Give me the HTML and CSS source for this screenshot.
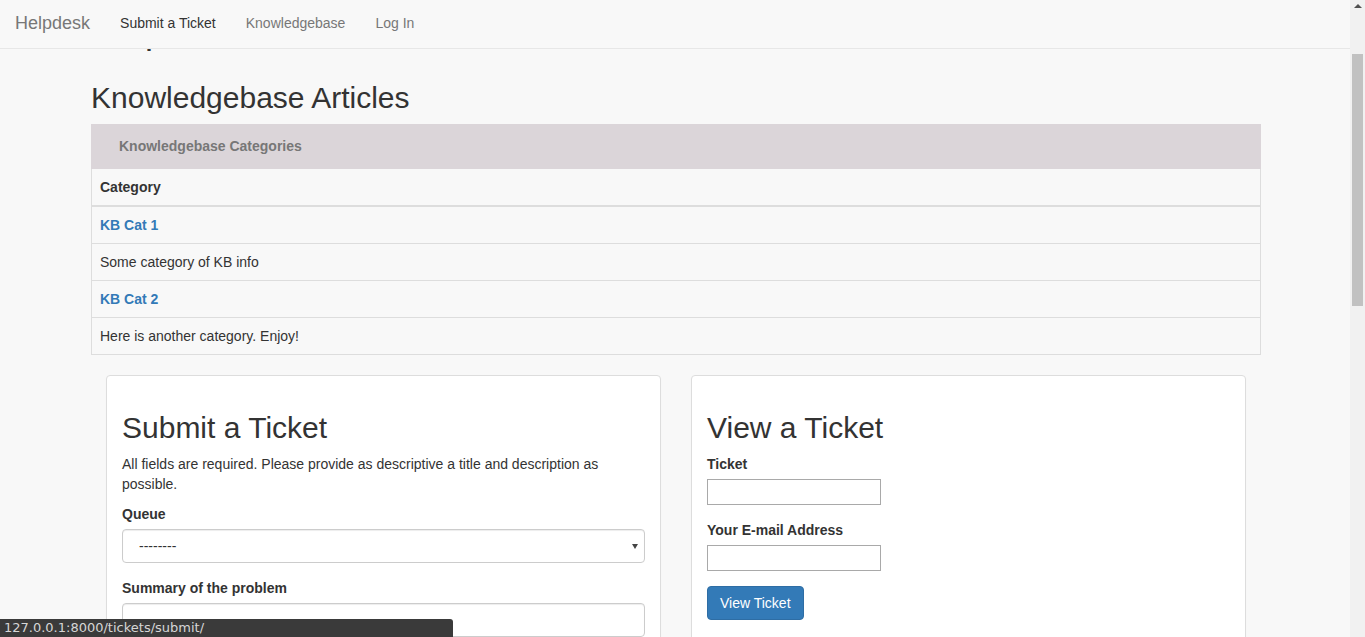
FILE: index.html
```html
<!DOCTYPE html>
<html lang="en">
<head>
<meta charset="utf-8">
<title>Helpdesk</title>
<link rel="stylesheet" href="styles.css">
</head>
<body>
<nav class="navbar">
  <a class="brand" href="#">Helpdesk</a>
  <ul class="nav">
    <li><a class="nav-link active" href="#">Submit a Ticket</a></li>
    <li><a class="nav-link" href="#">Knowledgebase</a></li>
    <li><a class="nav-link" href="#">Log In</a></li>
  </ul>
</nav>

<div class="page">
  <main class="container">
    <h1 class="site-title">Helpdesk</h1>
    <h2 class="page-title">Knowledgebase Articles</h2>

    <section class="kb-panel">
      <div class="kb-heading">Knowledgebase Categories</div>
      <table class="kb-table">
        <thead>
          <tr><th>Category</th></tr>
        </thead>
        <tbody>
          <tr><td><a class="kb-link" href="#">KB Cat 1</a></td></tr>
          <tr><td>Some category of KB info</td></tr>
          <tr><td><a class="kb-link" href="#">KB Cat 2</a></td></tr>
          <tr><td>Here is another category. Enjoy!</td></tr>
        </tbody>
      </table>
    </section>

    <div class="cards">
      <section class="card">
        <h2 class="card-title">Submit a Ticket</h2>
        <p class="card-text">All fields are required. Please provide as descriptive a title and description as possible.</p>
        <div class="form-group">
          <label class="label">Queue</label>
          <div class="select-wrap">
            <select class="form-control select"><option>--------</option></select>
          </div>
        </div>
        <div class="form-group">
          <label class="label">Summary of the problem</label>
          <input class="form-control" type="text">
        </div>
        <div class="form-group">
          <label class="label">Your E-mail Address</label>
          <input class="form-control" type="text">
        </div>
      </section>

      <section class="card">
        <h2 class="card-title">View a Ticket</h2>
        <div class="form-group">
          <label class="label">Ticket</label>
          <input class="plain-input" type="text">
        </div>
        <div class="form-group">
          <label class="label">Your E-mail Address</label>
          <input class="plain-input" type="text">
        </div>
        <button class="btn-primary" type="button">View Ticket</button>
      </section>
    </div>
  </main>
</div>

<div class="scrollbar">
  <span class="sb-arrow"></span>
  <span class="sb-thumb"></span>
</div>

<div class="statusbar">127.0.0.1:8000/tickets/submit/</div>
</body>
</html>
```

FILE: styles.css
```css
* { box-sizing: border-box; }

html, body {
  margin: 0;
  height: 637px;
  overflow: hidden;
}

body {
  background: #f8f8f8;
  color: #333;
  font-family: "Liberation Sans", Arial, sans-serif;
  font-size: 14px;
  line-height: 20px;
}

a { text-decoration: none; }

/* navbar */
.navbar {
  position: fixed;
  top: 0;
  left: 0;
  width: 1350px;
  height: 49px;
  background: #f8f8f8;
  border-bottom: 1px solid #e7e7e7;
  display: flex;
  align-items: flex-start;
  z-index: 10;
}

.brand {
  padding: 13px 15px 15px;
  font-size: 18px;
  line-height: 20px;
  color: #777;
}

.nav {
  list-style: none;
  margin: 0;
  padding: 0;
  display: flex;
}

.nav-link {
  display: block;
  padding: 13px 15px 15px;
  line-height: 20px;
  color: #777;
}

.nav-link.active { color: #333; }

/* page */
.page { width: 1352px; }

.container {
  width: 1170px;
  margin: 0 auto;
  padding-top: 11px;
}

.site-title {
  margin: 0 0 30px;
  font-size: 36px;
  font-weight: 500;
  line-height: 1.1;
}

.page-title {
  margin: 20px 0 10px;
  font-size: 30px;
  font-weight: 500;
  line-height: 1.1;
}

/* knowledgebase table */
.kb-panel { margin-bottom: 20px; }

.kb-heading {
  background: #dbd5d9;
  color: #777;
  font-weight: bold;
  padding: 12px 28px 13px;
  line-height: 20px;
}

.kb-table {
  width: 100%;
  border-collapse: collapse;
  border: 1px solid #ddd;
  border-top: 0;
}

.kb-table th,
.kb-table td {
  text-align: left;
  padding: 8px;
  line-height: 20px;
}

.kb-table th {
  font-weight: bold;
  border-bottom: 2px solid #ddd;
}

.kb-table td { border-top: 1px solid #ddd; }

.kb-link {
  color: #337ab7;
  font-weight: bold;
}

/* cards */
.cards {
  display: grid;
  grid-template-columns: 555px 555px;
  column-gap: 30px;
  padding: 0 15px;
}

.card {
  background: #fff;
  border: 1px solid #ddd;
  border-radius: 4px;
  box-shadow: 0 1px 1px rgba(0, 0, 0, .05);
  padding: 15px 15px 15px;
}

.card-title {
  margin: 20px 0 10px;
  font-size: 30px;
  font-weight: 500;
  line-height: 1.1;
}

.card-text { margin: 0 0 10px; }

.form-group { margin-bottom: 15px; }

.label {
  display: block;
  font-weight: bold;
  margin-bottom: 5px;
}

.form-control {
  display: block;
  width: 100%;
  height: 34px;
  padding: 6px 12px;
  font-family: "Liberation Sans", Arial, sans-serif;
  font-size: 14px;
  color: #555;
  background: #fff;
  border: 1px solid #ccc;
  border-radius: 4px;
  box-shadow: inset 0 1px 1px rgba(0, 0, 0, .075);
}

.select-wrap { position: relative; }

.select {
  appearance: none;
  -webkit-appearance: none;
  padding-left: 16px;
  color: #333;
}

.select-wrap::after {
  content: "";
  position: absolute;
  right: 7px;
  top: 15px;
  border-left: 3px solid transparent;
  border-right: 3px solid transparent;
  border-top: 5px solid #444;
}

.plain-input {
  display: block;
  width: 174px;
  height: 26px;
  border: 1px solid #a9a9a9;
  background: #fff;
  padding: 2px 3px;
}

.btn-primary {
  display: inline-block;
  height: 34px;
  padding: 6px 12px;
  font-family: "Liberation Sans", Arial, sans-serif;
  font-size: 14px;
  line-height: 20px;
  color: #fff;
  background: #337ab7;
  border: 1px solid #2e6da4;
  border-radius: 4px;
}

/* fake browser chrome overlays */
.scrollbar {
  position: fixed;
  top: 0;
  right: 0;
  width: 15px;
  height: 637px;
  background: #f1f1f1;
  display: flex;
  flex-direction: column;
  align-items: center;
  z-index: 20;
}

.sb-arrow {
  margin-top: 4px;
  border-left: 4px solid transparent;
  border-right: 4px solid transparent;
  border-bottom: 4px solid #505050;
}

.sb-thumb {
  margin-top: 46px;
  width: 11px;
  height: 252px;
  background: #c1c1c1;
}

.statusbar {
  position: fixed;
  left: 0;
  bottom: 0;
  width: 453px;
  height: 18px;
  padding-left: 4px;
  background: #3a3a3a;
  color: #d6d6d6;
  font-family: "DejaVu Sans", sans-serif;
  font-size: 13px;
  line-height: 18px;
  border-top-right-radius: 3px;
  z-index: 30;
}
```
